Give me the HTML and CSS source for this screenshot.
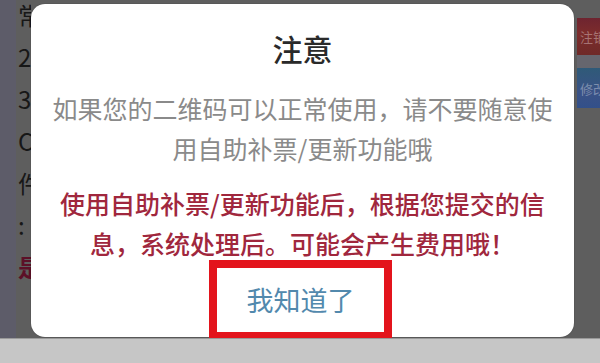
FILE: index.html
```html
<!DOCTYPE html>
<html lang="zh-CN">
<head>
<meta charset="utf-8">
<title>注意</title>
<link rel="stylesheet" href="styles.css">
</head>
<body>
<div class="screen">
  <div class="main">
    <div class="side-left">
      <div class="stripe"></div>
      <div class="behind-text">
        <span>常</span>
        <span>2</span>
        <span>3</span>
        <span>C</span>
        <span>件</span>
        <span>:</span>
        <span class="red">是</span>
      </div>
    </div>
    <div class="dialog">
      <h1 class="title">注意</h1>
      <p class="msg">如果您的二维码可以正常使用，请不要随意使用自助补票/更新功能哦</p>
      <p class="warn">使用自助补票/更新功能后，根据您提交的信息，系统处理后。可能会产生费用哦！</p>
      <div class="btn-box"><span class="btn">我知道了</span></div>
    </div>
    <div class="side-right">
      <div class="chip chip-red">注销</div>
      <div class="chip-gap"></div>
      <div class="chip chip-blue">修改</div>
    </div>
  </div>
  <div class="bar"></div>
</div>
</body>
</html>
```

FILE: styles.css
```css
* { box-sizing: border-box; margin: 0; padding: 0; }
html, body { width: 600px; height: 363px; overflow: hidden; }
body {
  font-family: "Noto Sans CJK SC", "Noto Sans", sans-serif;
  background: #5e5e5e;
}
.screen {
  width: 600px;
  height: 363px;
  display: flex;
  flex-direction: column;
}
.main {
  height: 338px;
  display: grid;
  grid-template-columns: 31px 543px 26px;
  background: #5e5e5e;
}
.side-left {
  display: flex;
  overflow: hidden;
}
.stripe {
  width: 16px;
  flex-shrink: 0;
  background: #5d5c69;
}
.behind-text {
  display: flex;
  flex-direction: column;
  flex-shrink: 0;
  margin-top: -6px;
  padding-left: 2px;
  font-size: 24px;
  line-height: 42px;
  color: #171717;
  white-space: nowrap;
}
.behind-text .red { color: #5c1027; font-weight: 700; }

.dialog {
  margin-top: 4px;
  height: 333px;
  background: #ffffff;
  border-radius: 14px;
  box-shadow: 0 0 1px rgba(0,0,0,0.6);
  display: flex;
  flex-direction: column;
  align-items: center;
  padding: 0 20px;
  text-align: center;
}
.title {
  margin-top: 24px;
  font-size: 30px;
  line-height: 40px;
  font-weight: 500;
  color: #2a2a2a;
}
.msg {
  margin-top: 20px;
  font-size: 25px;
  line-height: 40px;
  color: #8a8a8a;
}
.warn {
  margin-top: 15px;
  font-size: 25px;
  line-height: 40px;
  color: #a0273d;
  font-weight: 500;
}
.btn-box {
  margin-top: -3px;
  margin-right: 4px;
  width: 183px;
  height: 80px;
  border: 8px solid #e3141c;
  display: flex;
  align-items: center;
  justify-content: center;
  flex-shrink: 0;
}
.btn {
  font-size: 27px;
  line-height: 36px;
  color: #5289ad;
}

.side-right {
  display: flex;
  flex-direction: column;
  padding-top: 18px;
  padding-left: 3px;
  overflow: hidden;
}
.chip {
  font-size: 13px;
  color: rgba(255,255,255,0.35);
  padding-left: 3px;
  white-space: nowrap;
  display: flex;
  align-items: center;
}
.chip-red {
  height: 37px;
  background: linear-gradient(#6e2430, #7c2c2c 40%, #6f2a28);
}
.chip-gap { height: 13px; background: #66666e; }
.chip-blue {
  height: 40px;
  background: linear-gradient(#2f5a78, #3a5286 60%, #33508a);
}
.bar {
  height: 25px;
  background: #c6c6c6;
  border-top: 1px solid #9a9a9a;
}
```
